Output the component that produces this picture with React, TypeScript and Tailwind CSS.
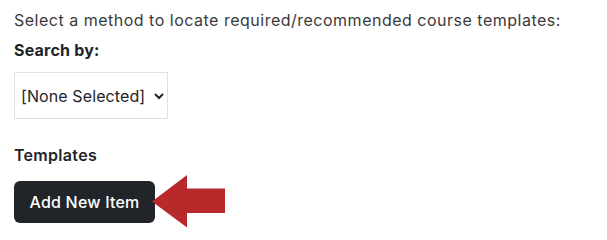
import React from 'react';

const Chevron: React.FC = () => (
  <svg width="10" height="7" viewBox="0 0 10 7" className="ml-[9px] mt-[1px]">
    <polyline points="1,1 5,5 9,1" fill="none" stroke="#212529" strokeWidth="2" />
  </svg>
);

const RedArrow: React.FC = () => (
  <svg width="74" height="53" viewBox="0 0 74 53" className="-ml-[3px] shrink-0">
    <polygon points="0,26.5 35,0 35,13.5 73,13.5 73,38 35,38 35,52.5" fill="#b8292b" />
  </svg>
);

export default function App() {
  return (
    <div className="bg-white w-[607px] h-[236px] pl-[14px] pt-[8px] font-['Inter',sans-serif] text-[16px] leading-[24px] text-[#212529]">
      <p className="text-[#3a3a3a] tracking-[0.5px]">Select a method to locate required/recommended course templates:</p>
      <div className="mt-[6px] font-bold tracking-[0.2px]">Search by:</div>
      <div className="mt-[10px] w-[154px] h-[47px] border border-[#dee2e6] flex items-center pl-[6px]">
        <span className="tracking-[0.1px]">[None Selected]</span>
        <Chevron />
      </div>
      <div className="mt-[24px] font-semibold tracking-[0.3px]">Templates</div>
      <div className="mt-[8px] flex items-center">
        <button className="bg-[#212529] text-white font-medium rounded-[6px] h-[42px] w-[141px] tracking-[0.2px]">
          Add New Item
        </button>
        <RedArrow />
      </div>
    </div>
  );
}
